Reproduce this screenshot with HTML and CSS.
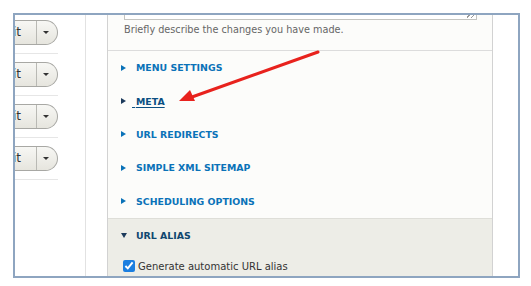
FILE: index.html
```html
<!DOCTYPE html>
<html>
<head>
  <title>Node edit sidebar</title>
  <link rel="stylesheet" href="styles.css">
</head>
<body>
  <div class="frame">
    <div class="ops-col">
      <div class="ops-list">
        <div class="ops-row">
          <div class="split-btn"><span class="btn-main">Edit</span><span class="btn-toggle"><i class="caret"></i></span></div>
        </div>
        <div class="ops-row">
          <div class="split-btn"><span class="btn-main">Edit</span><span class="btn-toggle"><i class="caret"></i></span></div>
        </div>
        <div class="ops-row">
          <div class="split-btn"><span class="btn-main">Edit</span><span class="btn-toggle"><i class="caret"></i></span></div>
        </div>
        <div class="ops-row">
          <div class="split-btn"><span class="btn-main">Edit</span><span class="btn-toggle"><i class="caret"></i></span></div>
        </div>
      </div>
    </div>

    <div class="spacer"></div>

    <div class="panel">
      <div class="revision">
        <div class="textarea"><span class="grip"></span></div>
        <div class="description">Briefly describe the changes you have made.</div>
      </div>

      <div class="summary"><span class="tri"></span><span class="label">MENU SETTINGS</span></div>
      <div class="summary active"><span class="tri"></span><span class="label"><span class="lead">&nbsp;</span>META</span></div>
      <div class="summary"><span class="tri"></span><span class="label">URL REDIRECTS</span></div>
      <div class="summary"><span class="tri"></span><span class="label">SIMPLE XML SITEMAP</span></div>
      <div class="summary"><span class="tri"></span><span class="label">SCHEDULING OPTIONS</span></div>

      <div class="open-section">
        <div class="summary open"><span class="tri"></span><span class="label">URL ALIAS</span></div>
        <label class="check-row"><input type="checkbox" checked> Generate automatic URL alias</label>
      </div>
    </div>
  </div>

  <svg class="callout" width="531" height="286" viewBox="0 0 531 286">
    <line x1="318" y1="52" x2="192" y2="97" stroke="#e8221d" stroke-width="3" stroke-linecap="round"/>
    <polygon points="179,101 190,90 195,101" fill="#e8221d"/>
  </svg>
</body>
</html>
```

FILE: styles.css
```css
body {
  margin: 0;
  background: white;
  font-family: "DejaVu Sans", Verdana, sans-serif;
  position: relative;
  width: 531px;
  height: 286px;
  overflow: hidden;
}
.frame {
  margin: 13px 0 0 13px;
  width: 503px;
  height: 261px;
  border: 2px solid #8ea5c0;
  overflow: hidden;
  display: flex;
  background: white;
}
.ops-col {
  width: 70px;
  flex-shrink: 0;
  border-right: 1px solid #e2e2e2;
}
.ops-list {
  width: 43px;
  margin-top: -3px;
}
.ops-row {
  padding: 8px 0;
  border-bottom: 1px solid #e6e6e6;
}
.split-btn {
  display: flex;
  height: 23px;
  width: 71px;
  margin-left: -29px;
  border: 1px solid #a8a8a4;
  border-left: none;
  border-radius: 0 13px 13px 0;
  background: linear-gradient(#f7f7f4, #e6e5de);
  font-size: 12px;
  color: #333;
}
.btn-main {
  width: 50px;
  flex-shrink: 0;
  line-height: 23px;
  text-align: right;
  padding-right: 15px;
  box-sizing: border-box;
}
.btn-toggle {
  flex: 1;
  border-left: 1px solid #b9b9b4;
  display: flex;
  align-items: center;
  justify-content: center;
  padding-right: 2px;
}
.caret {
  width: 0;
  height: 0;
  border-left: 3px solid transparent;
  border-right: 3px solid transparent;
  border-top: 3px solid #333;
}
.spacer {
  width: 21px;
  flex-shrink: 0;
}
.panel {
  width: 384px;
  flex-shrink: 0;
  border-left: 1px solid #d2d2d2;
  border-right: 1px solid #d2d2d2;
  background: #fcfcfa;
}
.revision {
  display: flow-root;
  height: 35px;
  padding: 0 15px 0 16px;
  border-bottom: 1px solid #dcdcdc;
}
.textarea {
  height: 40px;
  margin-top: -37px;
  border: 1px solid #c4c4c0;
  background: white;
  position: relative;
}
.grip {
  position: absolute;
  right: 2px;
  bottom: 1px;
  width: 7px;
  height: 4px;
  background: repeating-linear-gradient(135deg, transparent 0 2px, #999 2px 3px);
}
.description {
  margin-top: 3px;
  font-size: 9.7px;
  line-height: 14px;
  color: #666;
}
.summary {
  height: 33.4px;
  display: flex;
  align-items: center;
  padding-left: 13px;
  font-size: 9.4px;
  font-weight: bold;
  color: #0a72b8;
}
.tri {
  width: 0;
  height: 0;
  border-top: 3px solid transparent;
  border-bottom: 3px solid transparent;
  border-left: 5px solid #0a72b8;
  margin-right: 10px;
}
.summary.active {
  color: #0b4f82;
}
.summary.active .tri {
  border-left-color: #1d3b5c;
  margin-right: 6px;
}
.summary.active .label {
  text-decoration: underline;
  text-underline-offset: 2px;
}
.lead {
  display: inline-block;
  width: 4px;
  text-decoration: underline;
}
.open-section {
  min-height: 80px;
  background: #edede7;
  border-top: 1px solid #dedeD8;
}
.summary.open {
  color: #10476f;
}
.summary.open .tri {
  border-top: 5px solid #1d3b5c;
  border-left: 3px solid transparent;
  border-right: 3px solid transparent;
  border-bottom: none;
  margin-right: 9px;
}
.check-row {
  display: flex;
  align-items: center;
  gap: 3px;
  padding: 8px 0 0 15px;
  font-size: 10px;
  color: #333;
}
.check-row input {
  margin: 0;
  width: 12px;
  height: 12px;
  accent-color: #1b7ee0;
}
.callout {
  position: absolute;
  left: 0;
  top: 0;
  pointer-events: none;
}
```
